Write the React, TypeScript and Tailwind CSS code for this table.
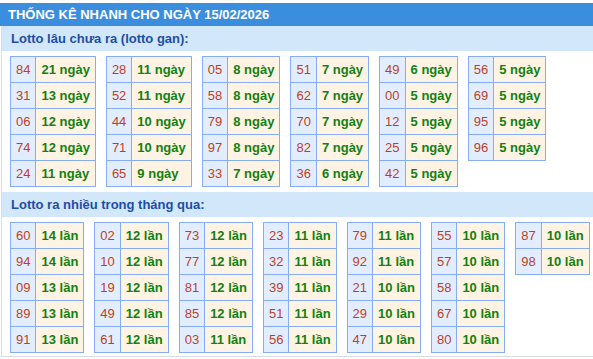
type Row = [string, string];

const ganTables: Row[][] = [
  [["84", "21 ngày"], ["31", "13 ngày"], ["06", "12 ngày"], ["74", "12 ngày"], ["24", "11 ngày"]],
  [["28", "11 ngày"], ["52", "11 ngày"], ["44", "10 ngày"], ["71", "10 ngày"], ["65", "9 ngày"]],
  [["05", "8 ngày"], ["58", "8 ngày"], ["79", "8 ngày"], ["97", "8 ngày"], ["33", "7 ngày"]],
  [["51", "7 ngày"], ["62", "7 ngày"], ["70", "7 ngày"], ["82", "7 ngày"], ["36", "6 ngày"]],
  [["49", "6 ngày"], ["00", "5 ngày"], ["12", "5 ngày"], ["25", "5 ngày"], ["42", "5 ngày"]],
  [["56", "5 ngày"], ["69", "5 ngày"], ["95", "5 ngày"], ["96", "5 ngày"]],
];

const hotTables: Row[][] = [
  [["60", "14 lần"], ["94", "14 lần"], ["09", "13 lần"], ["89", "13 lần"], ["91", "13 lần"]],
  [["02", "12 lần"], ["10", "12 lần"], ["19", "12 lần"], ["49", "12 lần"], ["61", "12 lần"]],
  [["73", "12 lần"], ["77", "12 lần"], ["81", "12 lần"], ["85", "12 lần"], ["03", "11 lần"]],
  [["23", "11 lần"], ["32", "11 lần"], ["39", "11 lần"], ["51", "11 lần"], ["56", "11 lần"]],
  [["79", "11 lần"], ["92", "11 lần"], ["21", "10 lần"], ["29", "10 lần"], ["47", "10 lần"]],
  [["55", "10 lần"], ["57", "10 lần"], ["58", "10 lần"], ["67", "10 lần"], ["80", "10 lần"]],
  [["87", "10 lần"], ["98", "10 lần"]],
];

const LottoTable = ({ rows }: { rows: Row[] }) => (
  <div className="grid shrink-0 grid-cols-[auto_auto] self-start whitespace-nowrap border-l border-t border-[#86acf3]">
    {rows.map(([num, val]) => (
      <div key={num} className="contents">
        <div className="flex h-[26px] items-center border-b border-r border-[#86acf3] bg-[#e2eeff] px-[5px] text-[13px] text-[#bf3f1d]">
          {num}
        </div>
        <div className="flex h-[26px] items-center border-b border-r border-[#86acf3] bg-[#fff4e3] px-[5px] text-[13px] font-bold text-[#128012]">
          {val}
        </div>
      </div>
    ))}
  </div>
);

const SubHeader = ({ title }: { title: string }) => (
  <div className="flex h-[25px] items-center bg-[#d3e7fb] pl-[9px] text-[13px] font-bold text-[#1c4ea6]">
    {title}
  </div>
);

export default function App() {
  return (
    <div className="h-[359px] w-[593px] bg-white pt-[3px] font-['Liberation_Sans',Arial,sans-serif]">
      <div className="flex h-[23px] items-center bg-[#3b8ede] pl-[8px] text-[13px] font-bold text-white">
        THỐNG KÊ NHANH CHO NGÀY 15/02/2026
      </div>
      <div className="ml-[1px] h-[331px] border-b border-l border-[#d5dde6]">
        <SubHeader title="Lotto lâu chưa ra (lotto gan):" />
        <div className="flex gap-[10px] pb-[5px] pl-[8px] pt-[5px]">
          {ganTables.map((rows, i) => (
            <LottoTable key={i} rows={rows} />
          ))}
        </div>
        <SubHeader title="Lotto ra nhiều trong tháng qua:" />
        <div className="flex gap-[10px] pl-[8px] pt-[5px]">
          {hotTables.map((rows, i) => (
            <LottoTable key={i} rows={rows} />
          ))}
        </div>
      </div>
    </div>
  );
}
